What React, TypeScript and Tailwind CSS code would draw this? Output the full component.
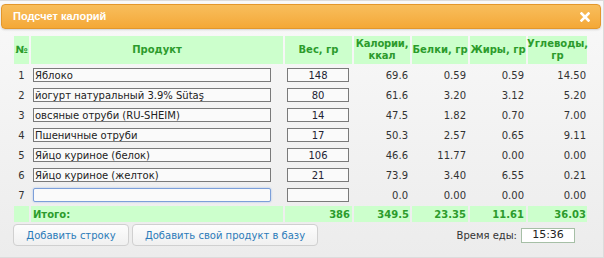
import { useState } from 'react';

// ── Data ──────────────────────────────────────────────────────────────────────
interface Row {
  name:   string;
  weight: string;
  kcal:   string;
  prot:   string;
  fat:    string;
  carb:   string;
}

const ROWS: Row[] = [
  { name: 'Яблоко',                        weight: '148', kcal: '69.6', prot: '0.59',  fat: '0.59', carb: '14.50' },
  { name: 'йогурт натуральный 3.9% Sütaş', weight: '80',  kcal: '61.6', prot: '3.20',  fat: '3.12', carb: '5.20' },
  { name: 'овсяные отруби (RU-SHEIM)',     weight: '14',  kcal: '47.5', prot: '1.82',  fat: '0.70', carb: '7.00' },
  { name: 'Пшеничные отруби',              weight: '17',  kcal: '50.3', prot: '2.57',  fat: '0.65', carb: '9.11' },
  { name: 'Яйцо куриное (белок)',          weight: '106', kcal: '46.6', prot: '11.77', fat: '0.00', carb: '0.00' },
  { name: 'Яйцо куриное (желток)',         weight: '21',  kcal: '73.9', prot: '3.40',  fat: '6.55', carb: '0.21' },
  { name: '',                              weight: '',    kcal: '0.0',  prot: '0.00',  fat: '0.00', carb: '0.00' },
];

const GRID = 'grid grid-cols-[15px_252px_67px_56px_56px_56px_59px] gap-x-[2px]';
const FONT = 'font-["DejaVu_Sans",sans-serif]';

function CloseIcon() {
  return (
    <svg width="10" height="10" viewBox="0 0 10 10">
      <path d="M1.5 1.5 L8.5 8.5 M8.5 1.5 L1.5 8.5" stroke="white" strokeWidth="2.6" strokeLinecap="square" />
    </svg>
  );
}

export default function App() {
  const [time, setTime] = useState('15:36');

  return (
    <div className={`w-[604px] h-[258px] flex flex-col bg-gradient-to-b from-[#f9f9f9] to-[#ececec] border-r border-b border-t border-[#dcdcdc] ${FONT}`}>
      {/* Title bar */}
      <div className="mx-[1px] mt-[3px] mr-[2px] h-[25px] flex items-center justify-between pl-[11px] pr-[10px] rounded-[4px] border border-[#e3972c] bg-gradient-to-b from-[#f8be5c] to-[#f4a836] shadow-[0_1px_2px_rgba(0,0,0,0.15)]">
        <span className='text-[11px] font-bold text-white font-["Liberation_Sans",sans-serif]'>Подсчет калорий</span>
        <CloseIcon />
      </div>

      {/* Table */}
      <div className="pl-[14px] pt-[7px] flex flex-col gap-y-[2px] text-[10px] text-[#333]">
        <div className={`${GRID} h-[28px] text-[#2c9b2c] font-bold leading-[12px]`}>
          <div className="bg-[#ccffcc] flex items-center justify-center">№</div>
          <div className="bg-[#ccffcc] flex items-center justify-center">Продукт</div>
          <div className="bg-[#ccffcc] flex items-center justify-center">Вес, гр</div>
          <div className="bg-[#ccffcc] flex items-center justify-center text-center tracking-[-0.2px]">Калории,<br />ккал</div>
          <div className="bg-[#ccffcc] flex items-center justify-center">Белки, гр</div>
          <div className="bg-[#ccffcc] flex items-center justify-center">Жиры, гр</div>
          <div className="bg-[#ccffcc] flex items-center justify-center text-center">Углеводы,<br />гр</div>
        </div>

        {ROWS.map((r, i) => (
          <div key={i} className={`${GRID} h-[18px] items-center`}>
            <div className="text-center">{i + 1}</div>
            <div className="pl-[2px]">
              <input
                defaultValue={r.name}
                className={`w-[238px] h-[14px] px-[1px] text-[10px] text-[#222] bg-[#fafafa] outline-none ${
                  i === 6
                    ? 'border border-[#7c9fd9] rounded-[2px] shadow-[0_0_2px_#9fbce8]'
                    : 'border border-[#7a7a7a]'
                }`}
              />
            </div>
            <div className="pl-[2px]">
              <input
                defaultValue={r.weight}
                className="w-[62px] h-[14px] text-center text-[10px] text-[#223] bg-[#fafafa] border border-[#7a7a7a] outline-none"
              />
            </div>
            <div className="text-right pr-[2px]">{r.kcal}</div>
            <div className="text-right pr-[2px]">{r.prot}</div>
            <div className="text-right pr-[2px]">{r.fat}</div>
            <div className="text-right pr-[1px]">{r.carb}</div>
          </div>
        ))}

        <div className={`${GRID} h-[16px] text-[#2c9b2c] font-bold`}>
          <div className="bg-[#ccffcc]" />
          <div className="bg-[#ccffcc] pl-[2px] flex items-center">Итого:</div>
          <div className="bg-[#ccffcc] flex items-center justify-end pr-[2px]">386</div>
          <div className="bg-[#ccffcc] flex items-center justify-end pr-[1px]">349.5</div>
          <div className="bg-[#ccffcc] flex items-center justify-end pr-[2px]">23.35</div>
          <div className="bg-[#ccffcc] flex items-center justify-end pr-[2px]">11.61</div>
          <div className="bg-[#ccffcc] flex items-center justify-end pr-[1px]">36.03</div>
        </div>
      </div>

      {/* Footer */}
      <div className="flex items-center pl-[13px] pr-[28px] mt-[2px]">
        <button className="h-[22px] w-[116px] rounded-[4px] border border-[#d0d0d0] bg-gradient-to-b from-[#fdfdfd] to-[#f0f0f0] text-[10px] text-[#2b7bb9]">
          Добавить строку
        </button>
        <button className="ml-[3px] h-[22px] w-[186px] rounded-[4px] border border-[#d0d0d0] bg-gradient-to-b from-[#fdfdfd] to-[#f0f0f0] text-[10px] text-[#2b7bb9]">
          Добавить свой продукт в базу
        </button>
        <span className="ml-auto text-[10px] text-[#333]">Время еды:</span>
        <input
          value={time}
          onChange={e => setTime(e.target.value)}
          className="ml-[4px] w-[54px] h-[15px] text-center text-[11px] text-[#222] bg-white border border-[#a6bfa6] outline-none"
        />
      </div>
    </div>
  );
}
